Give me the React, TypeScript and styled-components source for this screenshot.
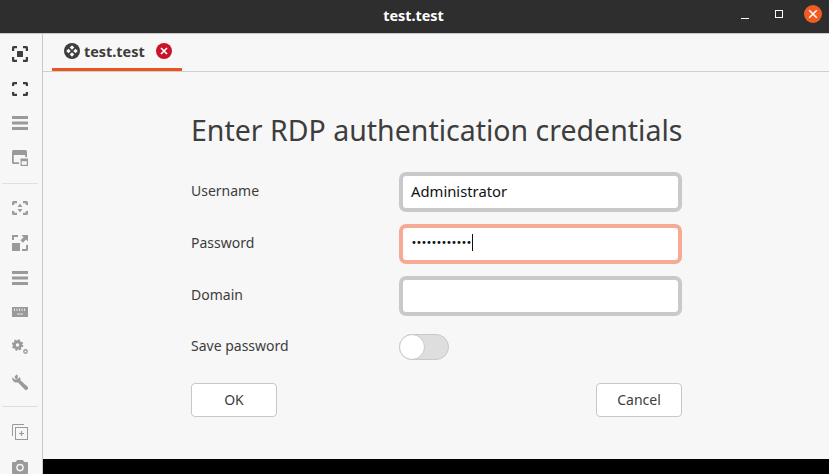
import React from 'react';
import styled, { createGlobalStyle } from 'styled-components';

const GlobalStyle = createGlobalStyle`
  html, body {
    margin: 0;
    padding: 0;
    height: 100%;
    overflow: hidden;
    background: #f7f7f7;
  }
  #root {
    height: 100%;
  }
  * {
    box-sizing: border-box;
  }
`;

const FONT = `'Noto Sans', 'Open Sans', sans-serif`;

const cornersFull = 'M0 5V1.5A1.5 1.5 0 0 1 1.5 0H5V2.2H2.2V5ZM11 0H14.5A1.5 1.5 0 0 1 16 1.5V5H13.8V2.2H11ZM16 11V14.5A1.5 1.5 0 0 1 14.5 16H11V13.8H13.8V11ZM5 16H1.5A1.5 1.5 0 0 1 0 14.5V11H2.2V13.8H5Z';
const cornersWide = 'M0 5V2.5A1.5 1.5 0 0 1 1.5 1H5V3.2H2.2V5ZM11 1H14.5A1.5 1.5 0 0 1 16 2.5V5H13.8V3.2H11ZM16 11V13.5A1.5 1.5 0 0 1 14.5 15H11V12.8H13.8V11ZM5 15H1.5A1.5 1.5 0 0 1 0 13.5V11H2.2V12.8H5Z';

const ScaleIcon = ({ color }: { color: string }) => (
  <svg width="16" height="16" viewBox="0 0 16 16" fill={color}>
    <path d={cornersFull} />
    <rect x="5" y="5" width="6" height="6" rx="0.5" />
  </svg>
);

const FullscreenIcon = ({ color }: { color: string }) => (
  <svg width="16" height="16" viewBox="0 0 16 16" fill={color}>
    <path d={cornersWide} />
  </svg>
);

const MenuIcon = ({ color }: { color: string }) => (
  <svg width="16" height="16" viewBox="0 0 16 16" fill={color}>
    <rect x="0" y="1" width="16" height="3" />
    <rect x="0" y="6.5" width="16" height="3" />
    <rect x="0" y="12" width="16" height="3" />
  </svg>
);

const WindowIcon = ({ color }: { color: string }) => (
  <svg width="16" height="16" viewBox="0 0 16 16" fill={color}>
    <path d="M1.5 0H13.5A1.5 1.5 0 0 1 15 1.5V7H13.2V5H1.8V12.2H7V14H1.5A1.5 1.5 0 0 1 0 12.5V1.5A1.5 1.5 0 0 1 1.5 0Z" />
    <path fillRule="evenodd" d="M8.5 8.5H16V16H8.5ZM9.7 11.2V14.8H14.8V11.2Z" />
  </svg>
);

const AspectIcon = ({ color }: { color: string }) => (
  <svg width="16" height="16" viewBox="0 0 16 16" fill={color}>
    <path d={cornersWide} />
    <path d="M8 3.5L10.4 7H5.6ZM8 12.5L5.6 9H10.4Z" />
  </svg>
);

const ResizeIcon = ({ color }: { color: string }) => (
  <svg width="16" height="16" viewBox="0 0 16 16" fill={color}>
    <path d="M0 0H6V2H2V5H0ZM0 8H8V16H0ZM14 10H16V14.5A1.5 1.5 0 0 1 14.5 16H10V14H14Z" />
    <path d="M9.5 0H16V6.5L14 4.6L10.9 7.7L8.5 5.3L11.6 2.2Z" />
  </svg>
);

const KeyboardIcon = ({ color }: { color: string }) => (
  <svg width="16" height="16" viewBox="0 0 16 16">
    <rect x="0" y="3" width="16" height="10" fill={color} />
    <path d="M2.5 4.5V7M5 4.5V7M7.5 4.5V7M10 4.5V7M12.5 4.5V7M5 10H11" stroke="#e6e6e6" strokeWidth="1" fill="none" />
  </svg>
);

const GearsIcon = ({ color }: { color: string }) => (
  <svg width="16" height="16" viewBox="0 0 16 16" fill="none" stroke={color}>
    <circle cx="5.5" cy="6" r="3.2" strokeWidth="3" />
    <circle cx="5.5" cy="6" r="5" strokeWidth="1.6" strokeDasharray="2 1.93" />
    <circle cx="13.5" cy="12.5" r="1.7" strokeWidth="1.4" />
  </svg>
);

const WrenchIcon = ({ color }: { color: string }) => (
  <svg width="16" height="16" viewBox="0 0 16 16" fill={color}>
    <path d="M5 0.2L2.6 2.6L3.2 4.6L5.2 5.2L7.7 2.9A4.4 4.4 0 0 1 8.4 6.2L15.4 12.6A1.8 1.8 0 0 1 12.8 15.4L6 8.4A4.6 4.6 0 0 1 0.2 3.2L2.9 5.6L5 5.2A4.5 4.5 0 0 0 5 0.2Z" />
  </svg>
);

const DuplicateIcon = ({ color }: { color: string }) => (
  <svg width="16" height="16" viewBox="0 0 16 16" fill="none" stroke={color}>
    <path d="M0.5 12V0.5H12" strokeWidth="1" />
    <rect x="3.5" y="3.5" width="12" height="12" strokeWidth="1" />
    <path d="M9.5 7V12M7 9.5H12" strokeWidth="1.2" />
  </svg>
);

const CameraIcon = ({ color }: { color: string }) => (
  <svg width="16" height="16" viewBox="0 0 16 16" fill={color}>
    <path fillRule="evenodd" d="M1 3H4L5 1H11L12 3H15A1 1 0 0 1 16 4V14A1 1 0 0 1 15 15H1A1 1 0 0 1 0 14V4A1 1 0 0 1 1 3ZM8 4.8A3.8 3.8 0 1 0 8 12.4A3.8 3.8 0 0 0 8 4.8ZM8 6.2A2.4 2.4 0 1 1 8 11A2.4 2.4 0 0 1 8 6.2Z" />
  </svg>
);

const ACTIVE = '#3d3d3d';
const DIM = '#9a9a9a';

const App = () => (
  <Page>
    <GlobalStyle />
    <TitleBar>
      <WindowTitle>test.test</WindowTitle>
      <WindowControls>
        <MinimizeGlyph />
        <MaximizeGlyph />
        <CloseCircle>
          <svg width="10" height="10" viewBox="0 0 10 10" stroke="#fff" strokeWidth="1.5">
            <path d="M1.2 1.2L8.8 8.8M8.8 1.2L1.2 8.8" />
          </svg>
        </CloseCircle>
      </WindowControls>
    </TitleBar>
    <Body>
      <Sidebar>
        <ToolButton><ScaleIcon color={ACTIVE} /></ToolButton>
        <ToolButton><FullscreenIcon color={ACTIVE} /></ToolButton>
        <ToolButton><MenuIcon color={DIM} /></ToolButton>
        <ToolButton><WindowIcon color={DIM} /></ToolButton>
        <Separator />
        <ToolButton><AspectIcon color={DIM} /></ToolButton>
        <ToolButton><ResizeIcon color={DIM} /></ToolButton>
        <ToolButton><MenuIcon color={DIM} /></ToolButton>
        <ToolButton><KeyboardIcon color={DIM} /></ToolButton>
        <ToolButton><GearsIcon color={DIM} /></ToolButton>
        <ToolButton><WrenchIcon color={DIM} /></ToolButton>
        <Separator />
        <ToolButton><DuplicateIcon color={DIM} /></ToolButton>
        <ToolButton><CameraIcon color={DIM} /></ToolButton>
      </Sidebar>
      <Main>
        <TabBar>
          <Tab>
            <svg width="16" height="16" viewBox="0 0 16 16">
              <circle cx="8" cy="8" r="8" fill="#3d3d3d" />
              <path d="M8 2.2L10.3 4.5L8 6.8L5.7 4.5ZM8 9.2L10.3 11.5L8 13.8L5.7 11.5ZM4.5 5.7L6.8 8L4.5 10.3L2.2 8ZM11.5 5.7L13.8 8L11.5 10.3L9.2 8Z" fill="#f7f7f7" />
            </svg>
            <TabLabel>test.test</TabLabel>
            <TabClose>
              <svg width="8" height="8" viewBox="0 0 8 8" stroke="#fff" strokeWidth="1.7">
                <path d="M1 1L7 7M7 1L1 7" />
              </svg>
            </TabClose>
          </Tab>
        </TabBar>
        <Content>
          <Heading>Enter RDP authentication credentials</Heading>
          <FormGrid>
            <FieldLabel>Username</FieldLabel>
            <FieldBox>
              <FieldText>Administrator</FieldText>
            </FieldBox>
            <FieldLabel>Password</FieldLabel>
            <FieldBox $focused>
              <Dots>••••••••••••</Dots>
              <Caret />
            </FieldBox>
            <FieldLabel>Domain</FieldLabel>
            <FieldBox />
            <FieldLabel>Save password</FieldLabel>
            <Toggle>
              <Knob />
            </Toggle>
          </FormGrid>
          <Actions>
            <ActionButton>OK</ActionButton>
            <ActionButton>Cancel</ActionButton>
          </Actions>
        </Content>
        <BlackStrip />
      </Main>
    </Body>
  </Page>
);

const Page = styled.div`
  width: 829px;
  height: 474px;
  display: flex;
  flex-direction: column;
  overflow: hidden;
  font-family: ${FONT};
  color: #3d3d3d;
`;

const TitleBar = styled.header`
  flex: 0 0 34px;
  display: flex;
  align-items: center;
  justify-content: center;
  position: relative;
  padding: 0 2px 3px 0;
  background: #2e2e2e;
  border-bottom: 1px solid #c8c8c8;
`;

const WindowTitle = styled.div`
  color: #ffffff;
  font-size: 14.4px;
  font-weight: 700;
`;

const WindowControls = styled.div`
  position: absolute;
  right: 7px;
  top: 5px;
  display: flex;
  align-items: center;
`;

const MinimizeGlyph = styled.span`
  width: 8px;
  height: 1px;
  margin: 8px 26px 0 0;
  background: #ffffff;
`;

const MaximizeGlyph = styled.span`
  width: 8px;
  height: 8px;
  margin-right: 21px;
  border: 1px solid #ffffff;
`;

const CloseCircle = styled.span`
  width: 18px;
  height: 18px;
  border-radius: 50%;
  background: #f25c22;
  display: flex;
  align-items: center;
  justify-content: center;
`;

const Body = styled.div`
  flex: 1;
  min-height: 0;
  display: flex;
`;

const Sidebar = styled.nav`
  flex: 0 0 43px;
  display: flex;
  flex-direction: column;
  padding-top: 2.5px;
  background: #f7f7f7;
  border-right: 1px solid #c8c8c8;
  overflow: hidden;
`;

const ToolButton = styled.div`
  flex: 0 0 34.8px;
  display: flex;
  align-items: center;
  justify-content: center;
  padding-right: 2px;
`;

const Separator = styled.hr`
  flex: 0 0 1px;
  width: 36px;
  margin: 7px 2px;
  border: 0;
  background: #dfdfdf;
`;

const Main = styled.main`
  flex: 1;
  min-width: 0;
  display: flex;
  flex-direction: column;
  background: #f7f7f7;
`;

const TabBar = styled.div`
  flex: 0 0 37px;
  display: flex;
  padding-left: 9px;
  border-bottom: 1px solid #cfcfcf;
`;

const Tab = styled.div`
  width: 130px;
  height: 37px;
  display: flex;
  align-items: center;
  padding: 0 0 0 12px;
  border-bottom: 3px solid #e95420;
`;

const TabLabel = styled.span`
  margin-left: 4px;
  font-size: 14.4px;
  font-weight: 700;
  color: #3d3d3d;
`;

const TabClose = styled.span`
  width: 16px;
  height: 16px;
  margin-left: 11px;
  border-radius: 50%;
  background: #c7162b;
  display: flex;
  align-items: center;
  justify-content: center;
`;

const Content = styled.section`
  flex: 1;
  display: flex;
  flex-direction: column;
  padding: 0 147px 0 148px;
`;

const Heading = styled.h1`
  margin: 38px 0 22px;
  font-size: 28.5px;
  line-height: 40px;
  font-weight: 400;
  white-space: nowrap;
  color: #3d3d3d;
`;

const FormGrid = styled.div`
  display: grid;
  grid-template-columns: 208px 283px;
  grid-template-rows: 40px 40px 40px 38px;
  row-gap: 12px;
  align-items: center;
`;

const FieldLabel = styled.label`
  padding-bottom: 4px;
  font-size: 14px;
`;

const FieldBox = styled.div<{ $focused?: boolean }>`
  height: 40px;
  display: flex;
  align-items: center;
  padding: 0 8px 3px;
  background: #ffffff;
  border: 4px solid ${({ $focused }) => ($focused ? '#f6aa94' : '#c9c9c9')};
  border-radius: 7px;
`;

const FieldText = styled.span`
  font-size: 14.8px;
  color: #111111;
`;

const Dots = styled.span`
  font-family: 'DejaVu Sans', sans-serif;
  font-size: 10px;
  letter-spacing: -0.9px;
  color: #111111;
`;

const Caret = styled.span`
  width: 1px;
  height: 17px;
  margin-left: 1px;
  background: #111111;
`;

const Toggle = styled.div`
  width: 50px;
  height: 26px;
  background: #dedede;
  border: 1px solid #c8c8c8;
  border-radius: 13px;
  display: flex;
  align-items: center;
`;

const Knob = styled.span`
  width: 26px;
  height: 26px;
  margin-left: -1px;
  background: #ffffff;
  border: 1px solid #c8c8c8;
  border-radius: 50%;
`;

const Actions = styled.div`
  display: flex;
  justify-content: space-between;
  width: 491px;
  margin-top: 17px;
`;

const ActionButton = styled.div`
  width: 86px;
  height: 34px;
  display: flex;
  align-items: center;
  justify-content: center;
  padding-bottom: 2px;
  font-size: 14px;
  background: #ffffff;
  border: 1px solid #c8c8c8;
  border-radius: 4px;
`;

const BlackStrip = styled.div`
  flex: 0 0 15px;
  background: #000000;
`;

export default App;
